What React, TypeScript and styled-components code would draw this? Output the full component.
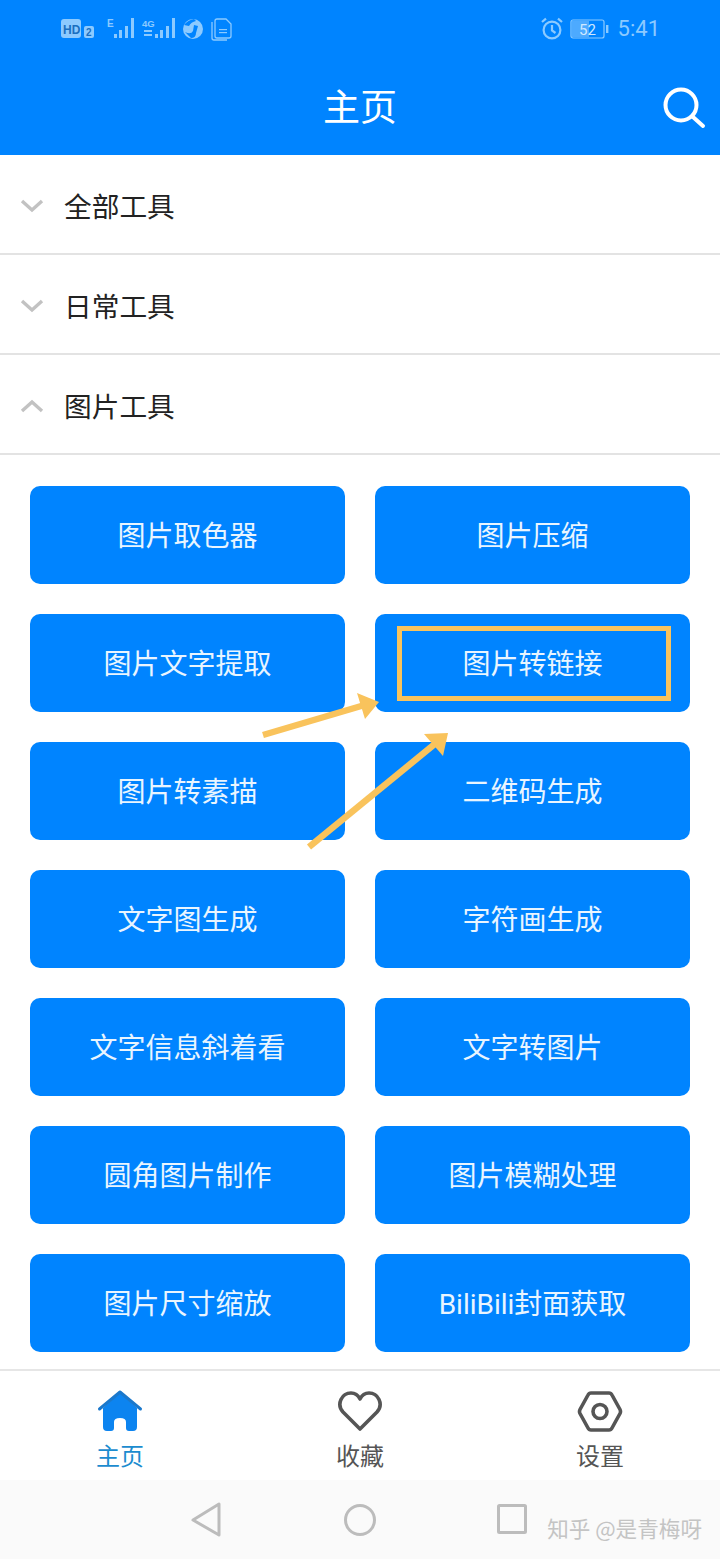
import React from "react";
import styled, { createGlobalStyle } from "styled-components";

const BLUE = "#0084ff";
const AMBER = "#f9c35c";

const GlobalStyle = createGlobalStyle`
  html, body {
    margin: 0;
    padding: 0;
    background: #fff;
    font-family: "Noto Sans CJK SC", "Noto Sans", sans-serif;
  }
  * { box-sizing: border-box; }
`;

const Page = styled.div`
  position: relative;
  width: 720px;
  height: 1559px;
  overflow: hidden;
  display: flex;
  flex-direction: column;
`;

const Header = styled.header`
  height: 155px;
  flex: none;
  background: ${BLUE};
  display: flex;
  flex-direction: column;
`;

const StatusBar = styled.div`
  height: 56px;
  padding: 17px 60px 0 61px;
  display: flex;
  justify-content: space-between;
  align-items: flex-start;
  color: #8ccaff;
`;

const StatusGroup = styled.div`
  display: flex;
  align-items: center;
  gap: 7px;
  height: 24px;
`;

const StatusTime = styled.span`
  font-family: Roboto, sans-serif;
  font-size: 22px;
  line-height: 24px;
`;

const TitleBar = styled.div`
  position: relative;
  flex: 1;
  display: flex;
  justify-content: center;
  align-items: center;
`;

const Title = styled.h1`
  margin: -2px 0 0;
  color: #fff;
  font-size: 37px;
  font-weight: 400;
  line-height: 50px;
`;

const SearchButton = styled.span`
  position: absolute;
  right: 14px;
  top: 30px;
  width: 44px;
  height: 44px;
  display: block;
`;

const SectionRow = styled.div`
  height: 100px;
  flex: none;
  padding: 4px 0 0 20px;
  border-bottom: 2px solid #e3e3e3;
  display: flex;
  align-items: center;
  gap: 20px;
`;

const SectionLabel = styled.span`
  margin-top: -2px;
  color: #222;
  font-size: 27.7px;
  line-height: 40px;
`;

const ToolGrid = styled.div`
  flex: 1;
  padding: 31px 30px 0;
  display: grid;
  grid-template-columns: 315px 315px;
  grid-auto-rows: 98px;
  gap: 30px;
`;

const ToolButton = styled.div`
  background: ${BLUE};
  border-radius: 10px;
  color: #e9f5ff;
  font-family: Roboto, "Noto Sans CJK SC", sans-serif;
  font-size: 28px;
  display: flex;
  justify-content: center;
  align-items: center;
  padding-bottom: 2px;
`;

const TabBar = styled.nav`
  height: 111px;
  flex: none;
  border-top: 2px solid #e6e6e6;
  display: grid;
  grid-template-columns: repeat(3, 1fr);
  background: #fff;
`;

const Tab = styled.div<{ $active?: boolean }>`
  padding-top: 19px;
  display: flex;
  flex-direction: column;
  align-items: center;
  color: ${(p) => (p.$active ? "#1c8ccf" : "#555")};
  font-size: 24px;
  line-height: 32px;
`;

const TabIcon = styled.svg`
  display: block;
  width: 46px;
  height: 42px;
  margin-bottom: 7px;
`;

const SystemNav = styled.div`
  height: 79px;
  flex: none;
  background: #fafafa;
  padding: 22px 193px 0 191px;
  display: flex;
  justify-content: space-between;
  align-items: flex-start;
`;

const Watermark = styled.span`
  position: absolute;
  right: 18px;
  bottom: 16px;
  color: #c4c4c4;
  font-size: 21.6px;
  line-height: 30px;
  white-space: nowrap;
`;

const Highlight = styled.div`
  position: absolute;
  left: 397px;
  top: 626px;
  width: 274px;
  height: 75px;
  border: 5px solid ${AMBER};
`;

const ArrowLayer = styled.svg`
  position: absolute;
  left: 0;
  top: 0;
  pointer-events: none;
`;

const sections = [
  { label: "全部工具", open: false },
  { label: "日常工具", open: false },
  { label: "图片工具", open: true },
];

const tools = [
  "图片取色器",
  "图片压缩",
  "图片文字提取",
  "图片转链接",
  "图片转素描",
  "二维码生成",
  "文字图生成",
  "字符画生成",
  "文字信息斜着看",
  "文字转图片",
  "圆角图片制作",
  "图片模糊处理",
  "图片尺寸缩放",
  "BiliBili封面获取",
];

function Chevron({ open }: { open: boolean }) {
  return (
    <svg width="24" height="14" viewBox="0 0 24 14" fill="none">
      <path
        d={open ? "M2 12 L12 3 L22 12" : "M2 2 L12 11 L22 2"}
        stroke="#c2c2c2"
        strokeWidth="3.4"
      />
    </svg>
  );
}

function LeftStatusIcons() {
  return (
    <svg width="172" height="24" viewBox="0 0 172 24" fill="currentColor">
      <rect x="0" y="2" width="20" height="19" rx="3" />
      <text x="2" y="17" fontFamily="Liberation Sans" fontSize="12" fontWeight="700" fill="#1b6fc0">
        HD
      </text>
      <rect x="23" y="9" width="10" height="12" rx="2" />
      <text x="25" y="19" fontFamily="Liberation Sans" fontSize="10" fontWeight="700" fill="#1b6fc0">
        2
      </text>
      <text x="46" y="10" fontFamily="Liberation Sans" fontSize="10" fontWeight="700">
        E
      </text>
      <rect x="53" y="17" width="3" height="4" />
      <rect x="58" y="13" width="3" height="8" />
      <rect x="64" y="9" width="3" height="12" />
      <rect x="70" y="1" width="3" height="20" />
      <text x="81" y="10" fontFamily="Liberation Sans" fontSize="9.5" fontWeight="700">
        4G
      </text>
      <rect x="83" y="13" width="8" height="2" />
      <rect x="83" y="17" width="8" height="2" />
      <rect x="94" y="17" width="3" height="4" />
      <rect x="99" y="13" width="3" height="8" />
      <rect x="105" y="9" width="3" height="12" />
      <rect x="111" y="1" width="3" height="20" />
      <circle cx="132" cy="12" r="10" />
      <path d="M123 8 Q127 3 133 2 L135 4 Q130 5 128 9 Z" fill={BLUE} />
      <path d="M124 15 Q130 18 132 14 L133 8 L137 9 L135 16 Q135 21 130 21 Z" fill={BLUE} />
      <path
        d="M156 2 H165 L170 7 V19 Q170 21 168 21 H156 Q154 21 154 19 V4 Q154 2 156 2 Z M151 5 V21 Q151 23 153 23 H166"
        fill="none"
        stroke="currentColor"
        strokeWidth="1.3"
      />
      <rect x="158" y="12" width="8" height="1.2" />
      <rect x="158" y="15" width="8" height="1.2" />
    </svg>
  );
}

function RightStatusIcons() {
  return (
    <>
      <svg width="22" height="24" viewBox="0 0 22 24" fill="none" stroke="currentColor" strokeWidth="2.2">
        <circle cx="11" cy="13" r="8.4" />
        <path d="M11 8 V13.5 L14.5 16" />
        <path d="M1 5 L5 1.6 M21 5 L17 1.6" />
      </svg>
      <svg width="41" height="24" viewBox="0 0 41 24" fill="none">
        <rect x="1" y="3" width="33" height="18" rx="2" stroke="currentColor" strokeWidth="1.2" />
        <rect x="2" y="4" width="17" height="16" fill="currentColor" opacity="0.55" />
        <rect x="36" y="8" width="2.4" height="8" fill="currentColor" />
        <text x="9" y="18" fontFamily="Roboto" fontSize="15" fill="#cfe8ff">
          52
        </text>
      </svg>
      <StatusTime>5:41</StatusTime>
    </>
  );
}

function NavIcons() {
  return (
    <>
      <svg width="32" height="36" viewBox="0 0 32 36" fill="none" stroke="#bcbcbc" strokeWidth="3" strokeLinejoin="round">
        <path d="M2 18 L28 2 V33 Z" />
      </svg>
      <svg width="32" height="36" viewBox="0 0 32 36" fill="none" stroke="#bcbcbc" strokeWidth="3">
        <circle cx="16" cy="18" r="14.5" />
      </svg>
      <svg width="30" height="36" viewBox="0 0 30 36" fill="none" stroke="#bcbcbc" strokeWidth="3" strokeLinejoin="round">
        <rect x="1.5" y="3.5" width="27" height="27" rx="1" />
      </svg>
    </>
  );
}

export default function App() {
  return (
    <Page>
      <GlobalStyle />
      <Header>
        <StatusBar>
          <StatusGroup>
            <LeftStatusIcons />
          </StatusGroup>
          <StatusGroup>
            <RightStatusIcons />
          </StatusGroup>
        </StatusBar>
        <TitleBar>
          <Title>主页</Title>
          <SearchButton>
            <svg width="44" height="44" viewBox="0 0 44 44" fill="none" stroke="#fff" strokeWidth="4" strokeLinecap="round">
              <circle cx="19" cy="19" r="15.5" />
              <path d="M31 31 L41 40" />
            </svg>
          </SearchButton>
        </TitleBar>
      </Header>

      {sections.map((s) => (
        <SectionRow key={s.label}>
          <Chevron open={s.open} />
          <SectionLabel>{s.label}</SectionLabel>
        </SectionRow>
      ))}

      <ToolGrid>
        {tools.map((t) => (
          <ToolButton key={t}>{t}</ToolButton>
        ))}
      </ToolGrid>

      <TabBar>
        <Tab $active>
          <TabIcon viewBox="0 0 46 42">
            <path
              d="M6 18 L23 2 L40 18 V37 Q40 41 36 41 H32 Q29 41 29 38 V32 Q29 28 23 28 Q17 28 17 32 V38 Q17 41 14 41 H10 Q6 41 6 37 Z"
              fill="#0c84f0"
            />
            <path d="M2.5 19 L23 2 L43.5 19" fill="none" stroke="#1a78cc" strokeWidth="3" strokeLinecap="round" strokeLinejoin="round" />
          </TabIcon>
          主页
        </Tab>
        <Tab>
          <TabIcon viewBox="0 0 46 42">
            <path
              d="M23 39 L6 22 C-1 14 5 3 14 3 C18 3 21 5 23 9 C25 5 28 3 32 3 C41 3 47 14 40 22 Z"
              fill="none"
              stroke="#555"
              strokeWidth="3.6"
              strokeLinejoin="round"
            />
          </TabIcon>
          收藏
        </Tab>
        <Tab>
          <TabIcon viewBox="0 0 46 42">
            <path
              d="M14 3 H32 Q34 3 35 5 L43 19.5 Q44 21.5 43 23.5 L35 38 Q34 40 32 40 H14 Q12 40 11 38 L3 23.5 Q2 21.5 3 19.5 L11 5 Q12 3 14 3 Z"
              fill="none"
              stroke="#555"
              strokeWidth="3.6"
            />
            <circle cx="23" cy="21.5" r="7" fill="none" stroke="#555" strokeWidth="3.6" />
          </TabIcon>
          设置
        </Tab>
      </TabBar>

      <SystemNav>
        <NavIcons />
      </SystemNav>
      <Watermark>知乎 @是青梅呀</Watermark>

      <Highlight />
      <ArrowLayer width="720" height="1559" viewBox="0 0 720 1559">
        <path d="M263 735 L368 704" stroke={AMBER} strokeWidth="6.5" fill="none" />
        <path d="M379 702 L357 693 L365 719 Z" fill={AMBER} />
        <path d="M309 847 L436 743" stroke={AMBER} strokeWidth="6.5" fill="none" />
        <path d="M448 733 L424 734 L443 756 Z" fill={AMBER} />
      </ArrowLayer>
    </Page>
  );
}
